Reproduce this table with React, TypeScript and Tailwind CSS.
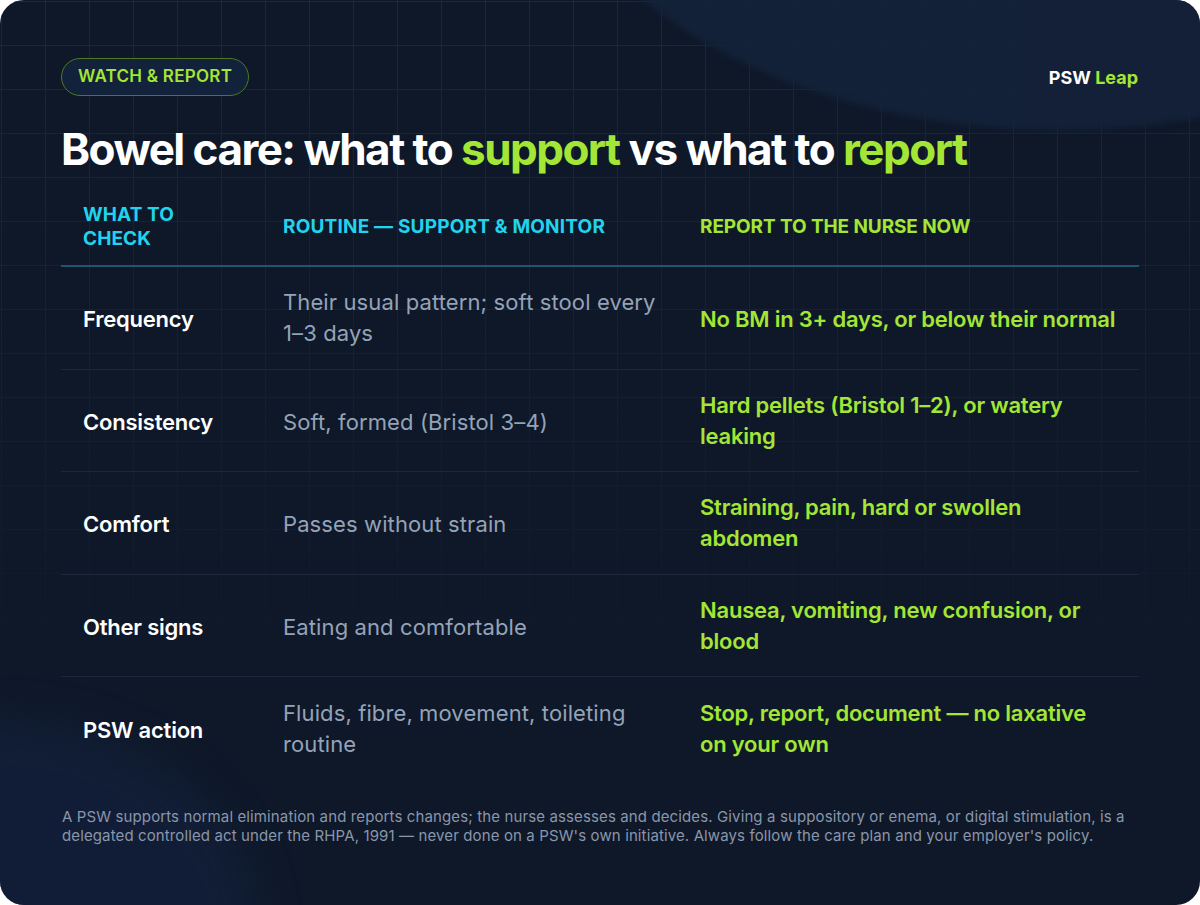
import React from "react";

const rows: { k: string; r: string[]; n: string[] }[] = [
  { k: "Frequency", r: ["Their usual pattern; soft stool every", "1–3 days"], n: ["No BM in 3+ days, or below their normal"] },
  { k: "Consistency", r: ["Soft, formed (Bristol 3–4)"], n: ["Hard pellets (Bristol 1–2), or watery", "leaking"] },
  { k: "Comfort", r: ["Passes without strain"], n: ["Straining, pain, hard or swollen", "abdomen"] },
  { k: "Other signs", r: ["Eating and comfortable"], n: ["Nausea, vomiting, new confusion, or", "blood"] },
  { k: "PSW action", r: ["Fluids, fibre, movement, toileting", "routine"], n: ["Stop, report, document — no laxative", "on your own"] },
];

export default function App() {
  return (
    <div className="w-[1200px] h-[905px] bg-white" style={{ fontFamily: "Inter, 'Noto Sans', sans-serif" }}>
      <div className="relative w-[1200px] h-[905px] rounded-[24px] overflow-hidden bg-[#0e1829]">
        {/* decorative background */}
        <div className="absolute inset-0 bg-[linear-gradient(to_right,#1a2740_1px,transparent_1px),linear-gradient(to_bottom,#1a2740_1px,transparent_1px)] bg-[size:44px_44px] bg-[position:1px_1px] [mask-image:linear-gradient(to_bottom,black_0%,rgba(0,0,0,0.6)_35%,rgba(0,0,0,0.15)_70%,transparent_100%)]" />
        <div className="absolute left-[540px] top-[-520px] w-[1040px] h-[650px] rounded-[50%] bg-[#14223a] blur-[3px] opacity-90" />
        <div className="absolute left-[-260px] top-[720px] w-[520px] h-[420px] rounded-[50%] bg-[#13203a] blur-[20px] opacity-80" />

        <div className="relative flex flex-col px-[61px] pt-[58px]">
          <div className="flex items-center justify-between">
            <div className="h-[38px] px-[16px] flex items-center rounded-full border border-[#4b7a23] bg-[#12223a] text-[#a3e635] text-[17px] font-semibold tracking-[0.015em]">
              WATCH &amp; REPORT
            </div>
            <div className="pr-[1px] text-[18px] font-bold">
              <span className="text-white">PSW </span>
              <span className="text-[#a3e635]">Leap</span>
            </div>
          </div>

          <h1 className="mt-[27px] text-[44px] leading-[52px] font-bold tracking-[-0.035em] text-white whitespace-nowrap">
            Bowel care: what to <span className="text-[#a3e635]">support</span> vs what to <span className="text-[#a3e635]">report</span>
          </h1>

          <div className="mt-[14px] grid grid-cols-[200px_417px_1fr]">
            <div className="px-[22px] py-[14px] flex items-center border-b-2 border-[#1d5670] text-[19px] leading-[24px] font-bold text-[#22d3ee] tracking-[0.005em]">
              WHAT TO<br />CHECK
            </div>
            <div className="px-[22px] py-[14px] flex items-center border-b-2 border-[#1d5670] text-[19px] leading-[24px] font-bold text-[#22d3ee] tracking-[0.01em] whitespace-nowrap">
              ROUTINE — SUPPORT &amp; MONITOR
            </div>
            <div className="px-[22px] py-[14px] flex items-center border-b-2 border-[#1d5670] text-[19px] leading-[24px] font-bold text-[#a3e635] tracking-[-0.005em] whitespace-nowrap">
              REPORT TO THE NURSE NOW
            </div>
            {rows.map((row, i) => (
              <React.Fragment key={row.k}>
                <div className={`h-[102.5px] px-[22px] pt-[4px] flex items-center text-[22px] font-semibold text-white tracking-[-0.01em] ${i < 4 ? "border-b border-[#1b283c]" : ""}`}>
                  {row.k}
                </div>
                <div className={`h-[102.5px] px-[22px] ${row.r.length === 1 ? "pt-[4px]" : "pt-[1px]"} flex flex-col justify-center text-[22px] leading-[31px] text-[#94a3b8] tracking-[0.005em] whitespace-nowrap ${i < 4 ? "border-b border-[#1b283c]" : ""}`}>
                  {row.r.map((l) => (
                    <span key={l}>{l}</span>
                  ))}
                </div>
                <div className={`h-[102.5px] px-[22px] ${row.n.length === 1 ? "pt-[4px]" : "pt-[1px]"} flex flex-col justify-center text-[22px] leading-[31px] font-semibold text-[#a3e635] tracking-[-0.01em] whitespace-nowrap ${i < 4 ? "border-b border-[#1b283c]" : ""}`}>
                  {row.n.map((l) => (
                    <span key={l}>{l}</span>
                  ))}
                </div>
              </React.Fragment>
            ))}
          </div>

          <p className="mt-[27px] pl-[1px] text-[15px] leading-[19px] text-[#8a96aa] tracking-[0.008em] whitespace-nowrap">
            A PSW supports normal elimination and reports changes; the nurse assesses and decides. Giving a suppository or enema, or digital stimulation, is a
            <br />
            delegated controlled act under the RHPA, 1991 — never done on a PSW's own initiative. Always follow the care plan and your employer's policy.
          </p>
        </div>
      </div>
    </div>
  );
}
